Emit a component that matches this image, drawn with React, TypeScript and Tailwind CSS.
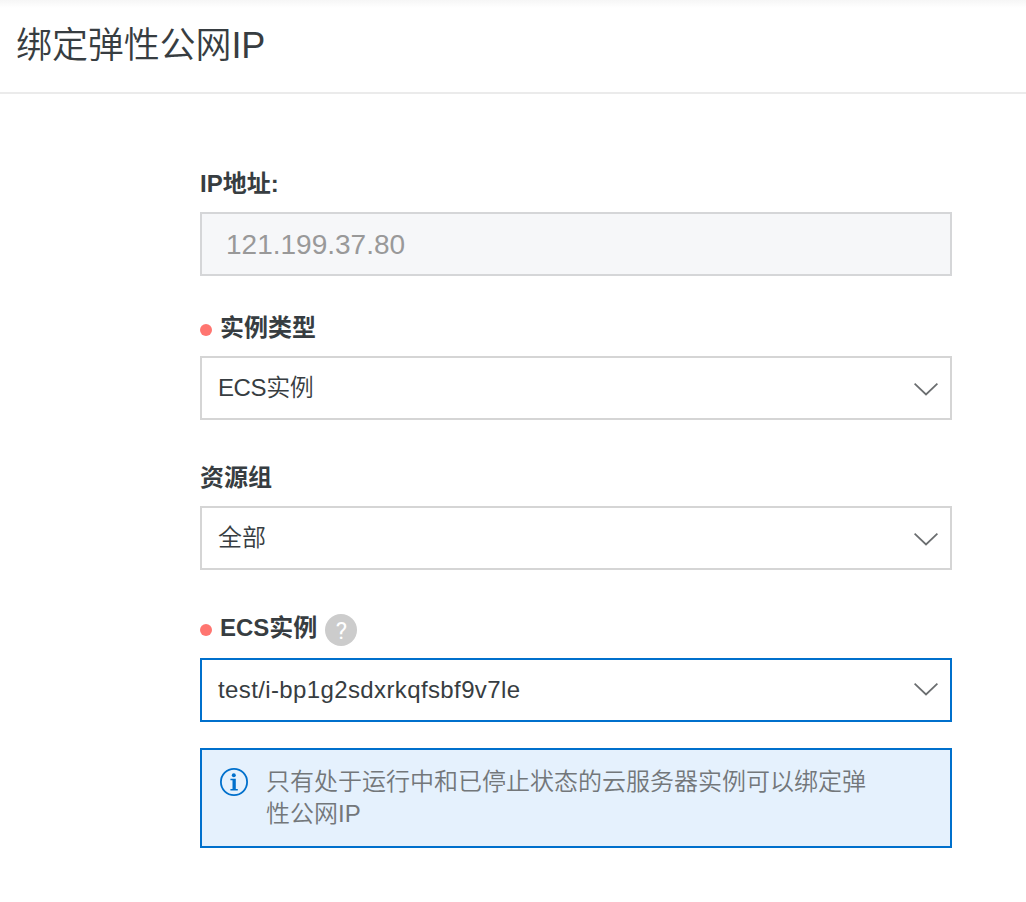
import React from "react";

function Chevron({ raised }: { raised?: boolean }) {
  return (
    <svg className={`mr-3 h-4 w-6 shrink-0 ${raised ? "mb-[3px]" : "mt-px"}`} viewBox="0 0 24 16" fill="none" stroke="#6b6e70" strokeWidth="1.8">
      <path d="M0.6 2.6 L12 13.4 L23.4 2.6" />
    </svg>
  );
}

function Label({ children, required }: { children: React.ReactNode; required?: boolean }) {
  return (
    <div className="flex h-8 items-center text-[24px] leading-8 font-bold">
      {required && <span className="mt-1 mr-2 size-3 shrink-0 rounded-full bg-[#ff7570]" />}
      {children}
    </div>
  );
}

function Select({ value, active, tracking = "" }: { value: string; active?: boolean; tracking?: string }) {
  return (
    <div className={`flex h-16 items-center justify-between border-2 pl-4 ${active ? "border-[#0070cc]" : "border-[#d5d5d5]"}`}>
      <span className={`text-[24px] leading-8 font-[350] ${tracking}`}>{value}</span>
      <Chevron raised={active} />
    </div>
  );
}

export default function App() {
  return (
    <main className="h-[902px] w-[1026px] overflow-hidden bg-white font-['Liberation_Sans','Noto_Sans_CJK_SC',sans-serif] text-[#373d41]">
      <header className="flex h-[94px] flex-col border-b-2 border-[#ebebeb]">
        <div className="h-2 bg-linear-to-b from-[#f6f6f6] to-white" />
        <h1 className="pt-[14px] pl-4 text-[36px] leading-[48px] font-[350] tracking-[-0.1px]">绑定弹性公网IP</h1>
      </header>
      <form className="ml-[200px] w-[752px] pt-[74px]">
        <Label>IP地址:</Label>
        <div className="mt-3 flex h-16 items-center border-2 border-[#d5d6d8] bg-[#f6f7f9] pt-0.5 pl-6 text-[28px] text-[#999]">121.199.37.80</div>
        <div className="mt-9">
          <Label required>实例类型</Label>
        </div>
        <div className="mt-3"><Select value="ECS实例" tracking="tracking-[-0.4px]" /></div>
        <div className="mt-[42px]"><Label>资源组</Label></div>
        <div className="mt-3"><Select value="全部" /></div>
        <div className="mt-[42px]">
          <Label required>
            ECS实例
            <span className="mt-1 ml-2 flex size-8 items-center justify-center rounded-full bg-[#ccc] pt-px font-[Roboto] text-[24px] font-normal text-white">?</span>
          </Label>
        </div>
        <div className="mt-[14px]"><Select value="test/i-bp1g2sdxrkqfsbf9v7le" active tracking="tracking-[0.38px]" /></div>
        <div className="mt-[26px] flex h-[100px] border-2 border-[#0070cc] bg-[#e5f1fd] pt-4 pl-[18px]">
          <svg className="mt-0.5 size-7 shrink-0" viewBox="0 0 28 28" fill="none">
            <circle cx="14" cy="14" r="13.1" stroke="#0070cc" strokeWidth="1.8" />
            <circle cx="13.8" cy="7.2" r="2" fill="#0070cc" />
            <path d="M10.4 10.8H15.8V21H17.8V22.5H10.4V21H12.5V12.3H10.4Z" fill="#0070cc" />
          </svg>
          <p className="ml-[18px] w-[602px] text-[24px] leading-8 font-[350] text-[#73777a]">只有处于运行中和已停止状态的云服务器实例可以绑定弹性公网IP</p>
        </div>
      </form>
    </main>
  );
}
